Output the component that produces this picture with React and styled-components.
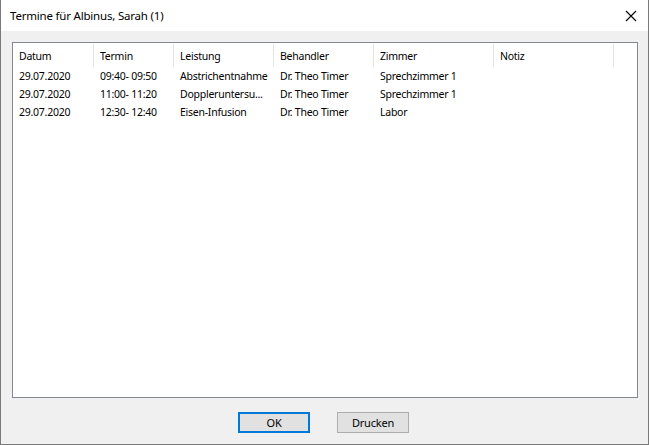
import React from "react";
import styled, { createGlobalStyle } from "styled-components";

const GlobalStyle = createGlobalStyle`
  * { box-sizing: border-box; }
  body {
    margin: 0;
    background: #ffffff;
    font-family: "Noto Sans", "Open Sans", sans-serif;
  }
`;

const Window = styled.div`
  width: 649px;
  height: 445px;
  display: flex;
  flex-direction: column;
  border: 1px solid #7a7a7a;
  border-top: none;
  background: #f0f0f0;
  color: #000;
  font-size: 10.5px;
  letter-spacing: -0.25px;
`;

const TitleBar = styled.div`
  height: 31px;
  flex: none;
  display: flex;
  align-items: center;
  justify-content: space-between;
  padding: 0 10px 0 9px;
  background: #ffffff;
  font-size: 11.5px;
  letter-spacing: -0.2px;
`;

const CloseButton = styled.div`
  width: 12px;
  height: 12px;
  display: flex;
  margin-right: 1px;
`;

const Body = styled.div`
  flex: 1;
  display: flex;
  flex-direction: column;
  padding: 11px 10px 0 11px;
`;

const ListView = styled.div`
  height: 356px;
  border: 1px solid #828790;
  background: #ffffff;
`;

const columns = "81px 80px 100px 100px 120px 120px 1fr";

const HeaderRow = styled.div`
  display: grid;
  grid-template-columns: ${columns};
  height: 24px;
  padding-top: 1px;
  line-height: 14px;
`;

const HeaderCell = styled.div`
  display: flex;
  align-items: center;
  padding-left: 6px;
  border-right: ${(p) => (p.$last ? "none" : "1px solid #e5e5e5")};
`;

const Row = styled.div`
  display: grid;
  grid-template-columns: ${columns};
  height: 18px;
  line-height: 18px;
`;

const Cell = styled.div`
  padding-left: 6px;
  white-space: nowrap;
  overflow: hidden;
`;

const Footer = styled.div`
  flex: 1;
  display: flex;
  justify-content: center;
  align-items: flex-start;
  gap: 27px;
  padding-top: 14px;
  padding-right: 3px;
`;

const Button = styled.button`
  width: 72px;
  height: 21px;
  padding: 0;
  font-family: inherit;
  font-size: 11px;
  letter-spacing: -0.2px;
  color: #000;
  background: #e1e1e1;
  border: ${(p) => (p.$default ? "2px solid #0078d7" : "1px solid #adadad")};
`;

const headers = ["Datum", "Termin", "Leistung", "Behandler", "Zimmer", "Notiz", ""];

const rows = [
  ["29.07.2020", "09:40- 09:50", "Abstrichentnahme", "Dr. Theo Timer", "Sprechzimmer 1", ""],
  ["29.07.2020", "11:00- 11:20", "Doppleruntersu...", "Dr. Theo Timer", "Sprechzimmer 1", ""],
  ["29.07.2020", "12:30- 12:40", "Eisen-Infusion", "Dr. Theo Timer", "Labor", ""],
];

export default function App() {
  return (
    <>
      <GlobalStyle />
      <Window>
        <TitleBar>
          <span>Termine für Albinus, Sarah (1)</span>
          <CloseButton>
            <svg width="12" height="12" viewBox="0 0 12 12">
              <path d="M1 1 L11 11 M11 1 L1 11" stroke="#000" strokeWidth="1.1" fill="none" />
            </svg>
          </CloseButton>
        </TitleBar>
        <Body>
          <ListView>
            <HeaderRow>
              {headers.map((h, i) => (
                <HeaderCell key={i} $last={i === headers.length - 1}>
                  {h}
                </HeaderCell>
              ))}
            </HeaderRow>
            {rows.map((r, i) => (
              <Row key={i}>
                {r.map((c, j) => (
                  <Cell key={j}>{c}</Cell>
                ))}
              </Row>
            ))}
          </ListView>
          <Footer>
            <Button $default>OK</Button>
            <Button>Drucken</Button>
          </Footer>
        </Body>
      </Window>
    </>
  );
}
